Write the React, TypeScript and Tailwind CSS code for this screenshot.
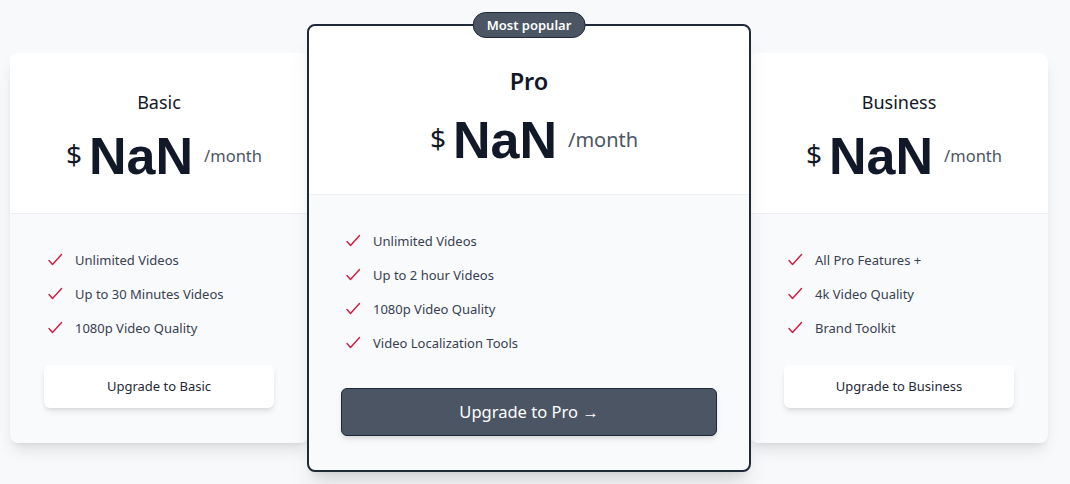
import React from "react";

const Check = () => (
  <svg width="16" height="16" viewBox="0 0 16 16" fill="none" className="shrink-0">
    <path d="M2 8.5 L5.5 12.5 L14.5 2.5" stroke="#d11a3f" strokeWidth="1.4" strokeLinecap="round" strokeLinejoin="round" />
  </svg>
);

const font = { fontFamily: '"Noto Sans", "Open Sans", sans-serif' };
const numFont = { fontFamily: '"Liberation Sans", Arial, sans-serif' };

function Price({ monthSize }: { monthSize: string }) {
  return (
    <div className="flex items-center h-[58px]">
      <span className="text-[28px] text-[#111827] leading-none mr-[7px] -mt-[4px]">$</span>
      <span className="text-[52px] font-bold text-[#111827] leading-none" style={numFont}>
        NaN
      </span>
      <span className={`${monthSize} text-[#4b5563] ml-[11px]`}>/month</span>
    </div>
  );
}

function SideCard({ title, features, cta }: { title: string; features: string[]; cta: string }) {
  return (
    <div className="w-[298px] shrink-0 rounded-lg bg-[#f9fafb] shadow-lg">
      <div className="rounded-t-lg bg-white border-b border-[#eef0f3] pt-[35px] pb-[28px] flex flex-col items-center">
        <div className="text-[18px] leading-[28px] text-[#111827]">{title}</div>
        <div className="mt-[11px] pl-[10px]">
          <Price monthSize="text-[16.5px]" />
        </div>
      </div>
      <div className="px-[34px] pt-[36px] pb-[35px]">
        <ul className="flex flex-col gap-[14px] pl-[3px]">
          {features.map((f) => (
            <li key={f} className="flex items-center gap-[12px] text-[13px] leading-[20px] text-[#374151]">
              <Check />
              <span>{f}</span>
            </li>
          ))}
        </ul>
        <button className="mt-[27px] w-full h-[43px] rounded-md bg-white shadow-md text-[13px] text-[#1f2937]">
          {cta}
        </button>
      </div>
    </div>
  );
}

export default function App() {
  const pro = ["Unlimited Videos", "Up to 2 hour Videos", "1080p Video Quality", "Video Localization Tools"];
  return (
    <div className="w-[1070px] h-[484px] bg-[#f8f9fb] overflow-hidden" style={font}>
      <div className="flex items-center pl-[10px] pt-[24px]">
        <SideCard
          title="Basic"
          features={["Unlimited Videos", "Up to 30 Minutes Videos", "1080p Video Quality"]}
          cta="Upgrade to Basic"
        />
        <div className="relative z-10 -ml-px w-[444px] shrink-0 rounded-lg border-2 border-[#1f2937] bg-[#f9fafb] shadow-xl">
          <div className="absolute left-1/2 -translate-x-1/2 -top-[14px] h-[26px] px-[13px] rounded-full bg-[#4b5563] border border-[#1f2937] flex items-center text-[13px] font-semibold text-white leading-none">
            Most popular
          </div>
          <div className="rounded-t-lg bg-white border-b border-[#eef0f3] pt-[39px] pb-[25px] flex flex-col items-center">
            <div className="text-[23.5px] leading-[32px] font-semibold text-[#111827]">Pro</div>
            <div className="mt-[14px] pl-[10px]">
              <Price monthSize="text-[20px]" />
            </div>
          </div>
          <div className="px-[32px] pt-[36px] pb-[34px]">
            <ul className="flex flex-col gap-[14px] pl-[4px]">
              {pro.map((f) => (
                <li key={f} className="flex items-center gap-[12px] text-[13px] leading-[20px] text-[#374151]">
                  <Check />
                  <span>{f}</span>
                </li>
              ))}
            </ul>
            <button className="mt-[35px] w-full h-[48px] rounded-md bg-[#4b5563] border border-[#1f2937] shadow-md text-[16.5px] text-white">
              Upgrade to Pro →
            </button>
          </div>
        </div>
        <div className="-ml-px">
          <SideCard
            title="Business"
            features={["All Pro Features +", "4k Video Quality", "Brand Toolkit"]}
            cta="Upgrade to Business"
          />
        </div>
      </div>
    </div>
  );
}
